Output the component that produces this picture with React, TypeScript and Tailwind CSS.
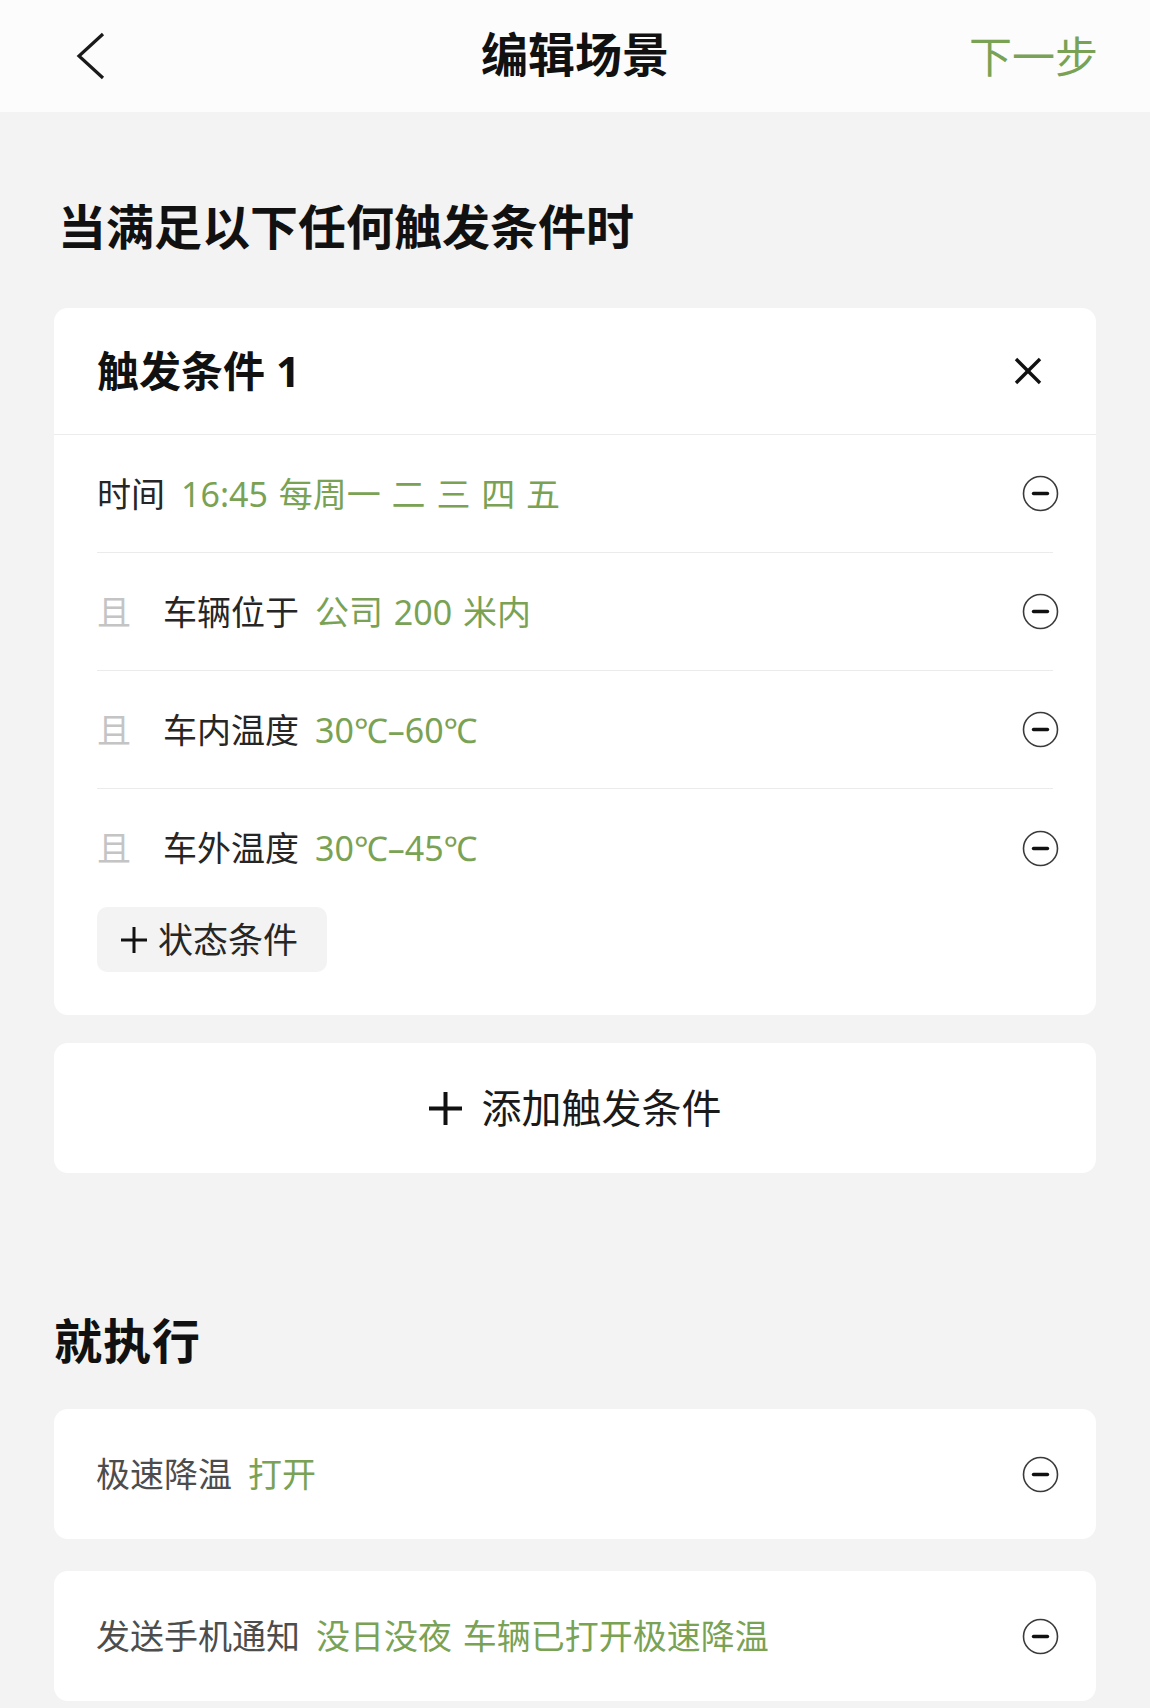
import React from 'react';

const green = 'text-[#79a255] [word-spacing:2px]';

function MinusCircle({ shift }: { shift?: boolean }) {
  return (
    <svg
      width="37"
      height="37"
      viewBox="0 0 37 37"
      className={`shrink-0 ${shift ? '-mr-[6px]' : '-mr-[3px]'}`}
    >
      <circle cx="18.5" cy="18.5" r="17" fill="none" stroke="#3a3a3a" strokeWidth="1.6" />
      <line x1="11.5" y1="18.5" x2="25.5" y2="18.5" stroke="#111" strokeWidth="3.4" strokeLinecap="round" />
    </svg>
  );
}

function PlusIcon({ size, stroke }: { size: number; stroke: number }) {
  return (
    <svg width={size} height={size} viewBox={`0 0 ${size} ${size}`} className="shrink-0">
      <line x1={size / 2} y1="0" x2={size / 2} y2={size} stroke="#111" strokeWidth={stroke} />
      <line x1="0" y1={size / 2} x2={size} y2={size / 2} stroke="#111" strokeWidth={stroke} />
    </svg>
  );
}

interface ConditionRowProps {
  label: string;
  value: string;
  joined?: boolean;
  last?: boolean;
}

function ConditionRow({ label, value, joined, last }: ConditionRowProps) {
  return (
    <div
      className={`flex items-center h-[118px] ${last ? '' : 'border-b border-[#ebebeb]'}`}
    >
      {joined && <span className="w-[66px] text-[#c4c4c4]">且</span>}
      <span className="text-[#262626]">{label}</span>
      <span className={`ml-[16px] ${green}`}>{value}</span>
      <div className="flex-1" />
      <MinusCircle shift />
    </div>
  );
}

export default function App() {
  // 触发条件
  const conditions = [
    { label: '车辆位于', value: '公司 200 米内' },
    { label: '车内温度', value: '30℃–60℃' },
    { label: '车外温度', value: '30℃–45℃' },
  ];

  // 执行动作
  const actions = [
    { label: '极速降温', value: '打开' },
    { label: '发送手机通知', value: '没日没夜 车辆已打开极速降温' },
  ];

  return (
    <div className="w-full min-h-[1708px] bg-[#f3f3f3] font-['Noto_Sans','Noto_Sans_CJK_SC',sans-serif] text-[34px] leading-none">
      {/* 顶部导航 */}
      <div className="h-[112px] bg-[#fcfcfc] grid grid-cols-[1fr_auto_1fr] items-center">
        <div className="pl-[76px]">
          <svg width="30" height="48" viewBox="0 0 30 48">
            <polyline points="27,2 3,24 27,46" fill="none" stroke="#1a1a1a" strokeWidth="3.2" strokeLinejoin="miter" />
          </svg>
        </div>
        <h1 className="text-[47px] font-bold text-[#111] -mt-[4px]">编辑场景</h1>
        <div className="flex justify-end pr-[52px]">
          <span className="text-[43px] text-[#79a255]">下一步</span>
        </div>
      </div>

      <div className="px-[54px]">
        <h2 className="mt-[87px] text-[48px] leading-[56px] font-bold text-[#111] pl-[4px]">
          当满足以下任何触发条件时
        </h2>

        {/* 触发条件 1 */}
        <div className="mt-[53px] bg-white rounded-[14px]">
          <div className="h-[127px] flex items-center justify-between pl-[43px] pr-[54px] border-b border-[#ececec]">
            <span className="text-[42px] font-bold text-[#111]">触发条件 1</span>
            <svg width="28" height="28" viewBox="0 0 28 28">
              <line x1="2" y1="2" x2="26" y2="26" stroke="#111" strokeWidth="3.4" />
              <line x1="26" y1="2" x2="2" y2="26" stroke="#111" strokeWidth="3.4" />
            </svg>
          </div>
          <div className="px-[43px] pb-[43px]">
            <ConditionRow label="时间" value="16:45 每周一 二 三 四 五" />
            {conditions.map((c, i) => (
              <ConditionRow
                key={c.label}
                label={c.label}
                value={c.value}
                joined
                last={i === conditions.length - 1}
              />
            ))}
            <button className="h-[65px] flex items-center gap-[11px] pl-[24px] pr-[29px] bg-[#f3f3f3] rounded-[10px] text-[#262626]">
              <PlusIcon size={26} stroke={3} />
              <span className="text-[35px]">状态条件</span>
            </button>
          </div>
        </div>

        {/* 添加触发条件 */}
        <div className="mt-[28px] h-[130px] bg-white rounded-[14px] flex items-center justify-center gap-[20px]">
          <PlusIcon size={33} stroke={4} />
          <span className="text-[40px] text-[#1a1a1a]">添加触发条件</span>
        </div>

        <h2 className="mt-[140px] text-[48px] leading-[56px] font-bold tracking-[1px] text-[#111]">就执行</h2>

        <div className="mt-[40px] flex flex-col gap-[32px]">
          {actions.map((a) => (
            <div key={a.label} className="h-[130px] bg-white rounded-[14px] flex items-center pl-[42px] pr-[40px]">
              <span className="text-[#4d4d4d]">{a.label}</span>
              <span className={`ml-[16px] ${green}`}>{a.value}</span>
              <div className="flex-1" />
              <MinusCircle />
            </div>
          ))}
        </div>
      </div>
    </div>
  );
}
